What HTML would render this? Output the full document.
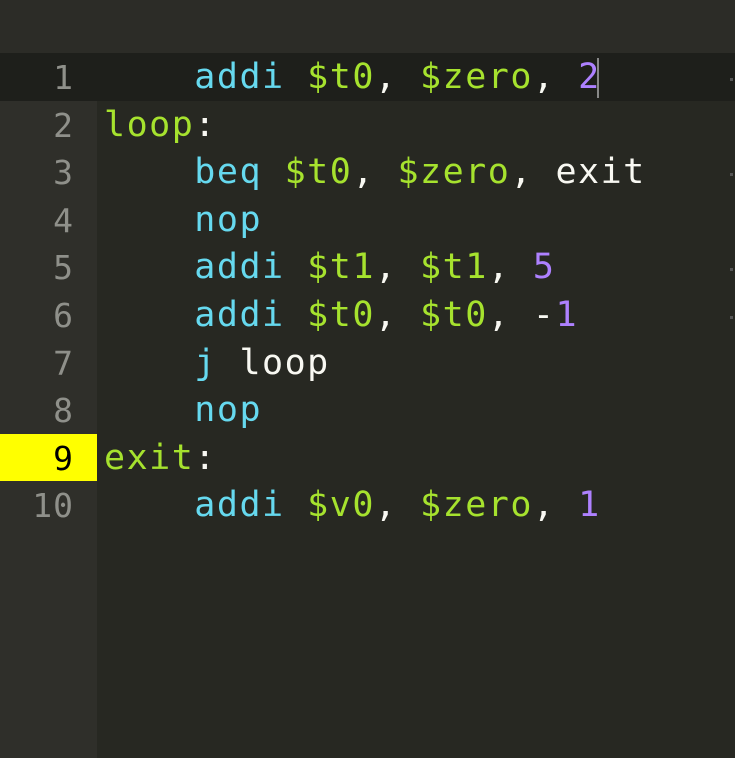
<!DOCTYPE html>
<html><head><meta charset="utf-8"><style>
body{margin:0;width:735px;height:758px;background:#272822;overflow:hidden;position:relative;font-family:"DejaVu Sans Mono","Liberation Mono",monospace;}
.top{position:absolute;left:0;top:0;width:735px;height:53px;background:#2c2c27;}
.gut{position:absolute;left:0;top:53px;width:97px;height:705px;background:#2f2f2a;}
.cur{position:absolute;left:0;top:53px;width:735px;height:48px;background:#1e1f1b;}
.hl{position:absolute;left:0;top:434px;width:97px;height:47px;background:#ffff00;}
.ln{position:absolute;left:0;width:74px;text-align:right;color:#8f908a;font-size:33px;line-height:47.6px;letter-spacing:1px;margin-top:1px;}
.code{position:absolute;left:104px;font-size:35px;line-height:47.6px;letter-spacing:1.5px;white-space:pre;color:#f8f8f2;margin-top:1px;}
.g{color:#a6e22e}.b{color:#66d9ef}.p{color:#ae81ff}
.caret{position:absolute;left:597px;top:58px;width:2px;height:40px;background:#888;}
.mk{position:absolute;left:730px;width:3px;height:3px;background:#555;}
</style></head><body>
<div class="top"></div><div class="gut"></div><div class="cur"></div><div class="hl"></div>
<div class="ln" style="top:53px">1</div>
<div class="ln" style="top:100.6px">2</div>
<div class="ln" style="top:148.2px">3</div>
<div class="ln" style="top:195.8px">4</div>
<div class="ln" style="top:243.4px">5</div>
<div class="ln" style="top:291px">6</div>
<div class="ln" style="top:338.6px">7</div>
<div class="ln" style="top:386.2px">8</div>
<div class="ln" style="top:433.8px;color:#000">9</div>
<div class="ln" style="top:481.4px">10</div>
<div class="code" style="top:53px">    <span class="b">addi</span> <span class="g">$t0</span>, <span class="g">$zero</span>, <span class="p">2</span></div>
<div class="code" style="top:100.6px"><span class="g">loop</span>:</div>
<div class="code" style="top:148.2px">    <span class="b">beq</span> <span class="g">$t0</span>, <span class="g">$zero</span>, exit</div>
<div class="code" style="top:195.8px">    <span class="b">nop</span></div>
<div class="code" style="top:243.4px">    <span class="b">addi</span> <span class="g">$t1</span>, <span class="g">$t1</span>, <span class="p">5</span></div>
<div class="code" style="top:291px">    <span class="b">addi</span> <span class="g">$t0</span>, <span class="g">$t0</span>, -<span class="p">1</span></div>
<div class="code" style="top:338.6px">    <span class="b">j</span> loop</div>
<div class="code" style="top:386.2px">    <span class="b">nop</span></div>
<div class="code" style="top:433.8px"><span class="g">exit</span>:</div>
<div class="code" style="top:481.4px">    <span class="b">addi</span> <span class="g">$v0</span>, <span class="g">$zero</span>, <span class="p">1</span></div>
<div class="caret"></div>
<div class="mk" style="top:78px"></div><div class="mk" style="top:173px"></div><div class="mk" style="top:268px"></div><div class="mk" style="top:316px"></div>
</body></html>
